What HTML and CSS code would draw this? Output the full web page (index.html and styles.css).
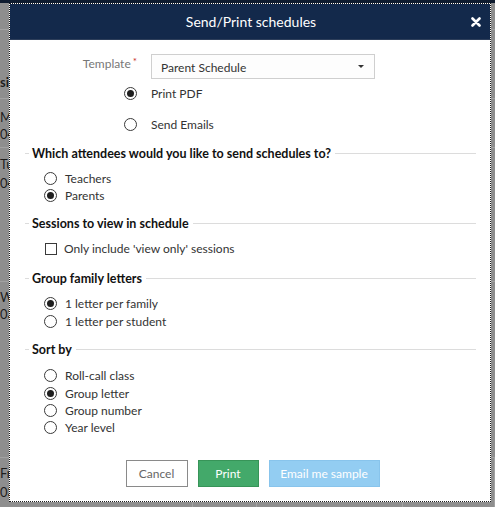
FILE: index.html
```html
<!DOCTYPE html>
<html>
<head>
<meta charset="utf-8">
<link rel="stylesheet" href="styles.css">
</head>
<body>
<div class="topbar"></div>
<div class="page">
  <div class="prow r1"></div>
  <div class="prow r2"><span class="ptext bold">si</span></div>
  <div class="prow r3"><span class="ptext">Mon</span><span class="ptext">04,</span></div>
  <div class="prow r4"><span class="ptext">Tue</span><span class="ptext">04,</span></div>
  <div class="prow r5"><span class="ptext">Wed</span><span class="ptext">03,</span></div>
  <div class="prow r6">
    <div class="pcell c1"><span class="ptext">Fri</span><span class="ptext">03,</span></div>
    <div class="pcell c2"></div>
    <div class="pcell c3"></div>
    <div class="pcell c4"></div>
  </div>
</div>

<div class="modal">
  <div class="modal-header">
    <span class="title">Send/Print schedules</span>
    <span class="close" aria-label="Close">
      <svg width="10" height="10" viewBox="0 0 10 10"><path d="M1.5 1.5 L8.5 8.5 M8.5 1.5 L1.5 8.5" stroke="#fff" stroke-width="2.6" stroke-linecap="round"/></svg>
    </span>
  </div>
  <div class="modal-body">
    <div class="form-grid">
      <label class="field-label">Template<sup class="req">*</sup></label>
      <div class="select">
        <span>Parent Schedule</span>
        <span class="caret"></span>
      </div>
      <span class="radio-cell"><input type="radio" name="mode" checked></span>
      <span class="opt-label">Print PDF</span>
      <span class="radio-cell"><input type="radio" name="mode"></span>
      <span class="opt-label">Send Emails</span>
    </div>

    <div class="section s1">
      <div class="sec-head"><span>Which attendees would you like to send schedules to?</span></div>
      <div class="opts">
        <label class="opt"><input type="radio" name="who"><span>Teachers</span></label>
        <label class="opt"><input type="radio" name="who" checked><span>Parents</span></label>
      </div>
    </div>

    <div class="section s2">
      <div class="sec-head"><span>Sessions to view in schedule</span></div>
      <div class="opts">
        <label class="opt"><input type="checkbox"><span>Only include 'view only' sessions</span></label>
      </div>
    </div>

    <div class="section s3">
      <div class="sec-head"><span>Group family letters</span></div>
      <div class="opts">
        <label class="opt"><input type="radio" name="grp" checked><span>1 letter per family</span></label>
        <label class="opt"><input type="radio" name="grp"><span>1 letter per student</span></label>
      </div>
    </div>

    <div class="section s4">
      <div class="sec-head"><span>Sort by</span></div>
      <div class="opts">
        <label class="opt"><input type="radio" name="sort"><span>Roll-call class</span></label>
        <label class="opt"><input type="radio" name="sort" checked><span>Group letter</span></label>
        <label class="opt"><input type="radio" name="sort"><span>Group number</span></label>
        <label class="opt"><input type="radio" name="sort"><span>Year level</span></label>
      </div>
    </div>

    <div class="actions">
      <button class="btn btn-cancel">Cancel</button>
      <button class="btn btn-print">Print</button>
      <button class="btn btn-email">Email me sample</button>
    </div>
  </div>
</div>
</body>
</html>
```

FILE: styles.css
```css
* { box-sizing: border-box; }

body {
  margin: 0;
  width: 495px;
  height: 507px;
  overflow: hidden;
  position: relative;
  background: #8e8e8e;
  font-family: Lato, "Open Sans", sans-serif;
}

.topbar {
  height: 3px;
  background: #0e1b2f;
}

/* background page (under overlay) */
.page { color: #1e1e1e; font-size: 13px; }
.prow {
  border-bottom: 1px solid #a2a2a2;
  display: flex;
  flex-direction: column;
  justify-content: flex-end;
}
.r1 { height: 27px; }
.r2 { height: 69px; padding-bottom: 9px; }
.r3 { height: 49px; justify-content: flex-start; padding-top: 11px; gap: 3px; }
.r4 { height: 134px; justify-content: flex-start; padding-top: 9px; gap: 5px; }
.r5 { height: 176px; justify-content: flex-start; padding-top: 8px; gap: 3px; }
.r6 {
  height: 60px;
  border-bottom: 0;
  display: grid;
  grid-template-columns: 193px 64px 146px 1fr;
}
.pcell { border-right: 1px solid #a2a2a2; display: flex; flex-direction: column; padding-top: 8px; gap: 5px; }
.ptext { display: block; line-height: 14px; }
.bold { font-weight: 700; }

/* modal */
.modal {
  position: absolute;
  left: 9px;
  top: 3px;
  width: 482px;
  height: 499px;
  border: 1px dotted #1c1c1c;
  background: #fff;
  display: flex;
  flex-direction: column;
}

.modal-header {
  height: 36px;
  flex: none;
  background: #13294b;
  border-bottom: 1px solid #2d3e5a;
  color: #fff;
  display: flex;
  align-items: center;
  justify-content: center;
  position: relative;
  font-size: 14px;
}
.title { margin-left: 2px; }
.close {
  position: absolute;
  right: 9px;
  top: 13px;
  width: 10px;
  height: 10px;
  display: block;
}
.close svg { display: block; }

.modal-body {
  flex: 1;
  padding-top: 14px;
  font-size: 12px;
  color: #333;
}

.form-grid {
  display: grid;
  grid-template-columns: 127px 224px;
  column-gap: 14px;
  row-gap: 9px;
  align-items: center;
}
.field-label {
  justify-self: end;
  color: #777;
  font-size: 12px;
  align-self: start;
  padding-top: 2px;
}
.req { color: #c9302c; font-size: 10px; vertical-align: 3px; margin-left: 2px; line-height: 0; }
.select {
  height: 25px;
  border: 1px solid #cfcfcf;
  background: #fdfdfd;
  display: flex;
  align-items: center;
  justify-content: space-between;
  padding: 2px 10px 0 9px;
  font-size: 12px;
  color: #333;
  margin-bottom: -6px;
}
.caret {
  width: 0;
  height: 0;
  border-left: 3px solid transparent;
  border-right: 3px solid transparent;
  border-top: 3px solid #333;
  margin-top: -2px;
}
.radio-cell { justify-self: end; display: flex; height: 22px; align-items: center; }
.opt-label { height: 22px; display: flex; align-items: center; }

input[type="radio"], input[type="checkbox"] {
  appearance: none;
  -webkit-appearance: none;
  margin: 0;
  width: 13px;
  height: 13px;
  border: 1px solid #3a3a3a;
  background: #fff;
  flex: none;
  display: grid;
  place-items: center;
}
input[type="radio"] { border-radius: 50%; }
input[type="radio"]:checked::before {
  content: "";
  width: 7px;
  height: 7px;
  border-radius: 50%;
  background: #1f1f1f;
}
input[type="checkbox"] { width: 12px; height: 12px; border-radius: 0; }

/* sections */
.section { margin: 10px 14px 0 15px; }
.sec-head {
  display: flex;
  align-items: center;
  height: 16px;
  font-weight: 700;
  font-size: 12.5px;
  color: #111;
}
.sec-head::before {
  content: "";
  width: 4px;
  border-top: 1px solid #dcdcdc;
  margin-right: 3px;
}
.sec-head::after {
  content: "";
  flex: 1;
  border-top: 1px solid #dcdcdc;
  margin-left: 4px;
}
.opts {
  margin-top: 8px;
  padding-left: 19px;
  display: flex;
  flex-direction: column;
}
.opt {
  height: 17px;
  display: flex;
  align-items: center;
  gap: 8px;
}
.opt input[type="checkbox"] { margin-left: 1px; margin-right: -1px; }
.s1 .opts { margin-top: 9px; }
.s1 .opt:last-child { height: 16px; }
.s2 { margin-top: 12px; }
.s2 .opts { margin-top: 9px; }
.s3 { margin-top: 13px; }
.s3 .opts { margin-top: 8px; }
.s3 .opt { height: 18px; }
.s4 { margin-top: 11px; }
.s4 .opts { margin-top: 10px; }
.s4 .opt { height: 17.4px; }

.actions {
  margin-top: 23px;
  display: flex;
  justify-content: center;
  gap: 10px;
  padding-left: 5px;
}
.btn {
  height: 27px;
  font-family: Lato, "Open Sans", sans-serif;
  font-size: 12px;
  border: 1px solid;
  padding: 0;
  color: #fff;
}
.btn-cancel { width: 62px; background: #fff; border-color: #8a8a8a; color: #666; }
.btn-print { width: 61px; background: #43a96a; border-color: #379458; }
.btn-email { width: 111px; background: #93cdf2; border-color: #88c4ec; }
```
